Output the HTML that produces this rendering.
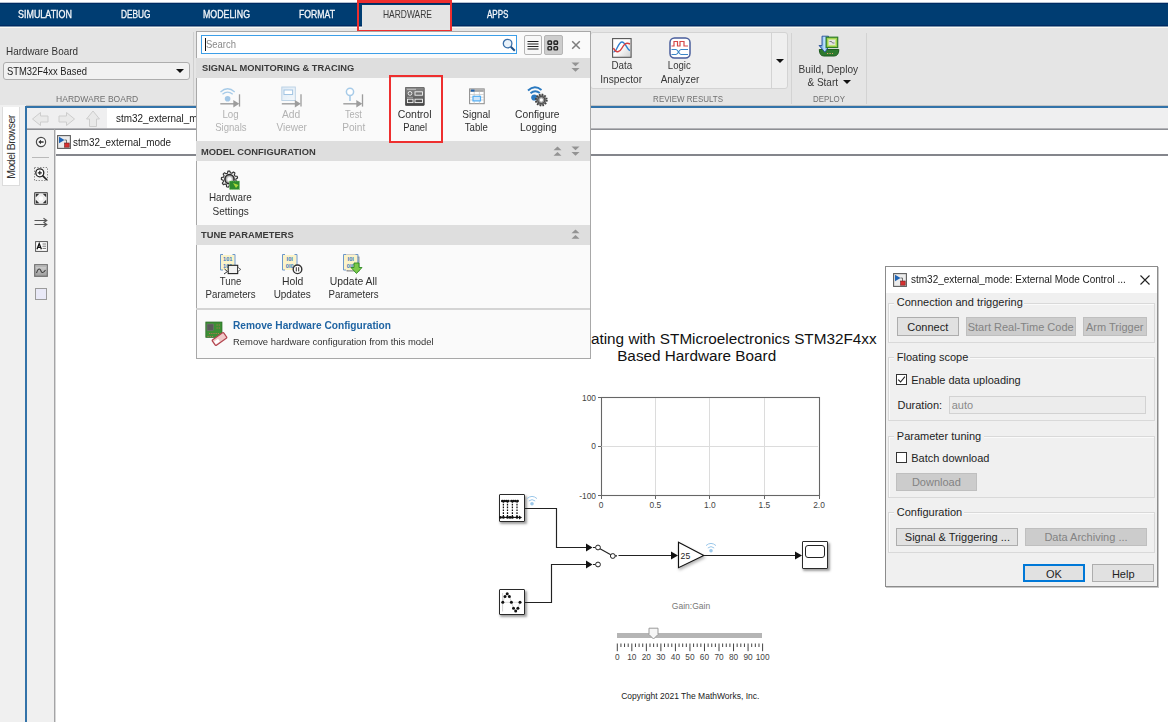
<!DOCTYPE html>
<html><head><meta charset="utf-8"><style>
html,body{margin:0;padding:0;width:1168px;height:722px;overflow:hidden;background:#fff;position:relative;font-family:"Liberation Sans",sans-serif}
</style></head><body>
<div style="position:absolute;left:0px;top:0px;width:1168px;height:3px;background:#fff"></div>
<div style="position:absolute;left:0px;top:3px;width:1168px;height:24px;background:#003d72"></div>
<div style="position:absolute;left:0px;top:2px;width:1168px;height:1px;background:#b3c2d2"></div>
<div style="position:absolute;left:0px;top:3px;width:1168px;height:1px;background:#002a62"></div>
<div style="position:absolute;left:0px;top:25px;width:1168px;height:1px;background:#002a62"></div>
<div style="position:absolute;left:0px;top:26px;width:1168px;height:1px;background:#7893ab"></div>
<div style="position:absolute;left:18px;top:9.57px;font:400 10.2px/1 'Liberation Sans',sans-serif;color:#f4f7fa;white-space:nowrap;-webkit-text-stroke:0.3px #f4f7fa"><span id="t1" style="display:inline-block;transform:scaleX(0.8778);transform-origin:0 0;">SIMULATION</span></div>
<div style="position:absolute;left:121px;top:9.57px;font:400 10.2px/1 'Liberation Sans',sans-serif;color:#f4f7fa;white-space:nowrap;-webkit-text-stroke:0.3px #f4f7fa"><span id="t2" style="display:inline-block;transform:scaleX(0.8141);transform-origin:0 0;">DEBUG</span></div>
<div style="position:absolute;left:202.5px;top:9.57px;font:400 10.2px/1 'Liberation Sans',sans-serif;color:#f4f7fa;white-space:nowrap;-webkit-text-stroke:0.3px #f4f7fa"><span id="t3" style="display:inline-block;transform:scaleX(0.8649);transform-origin:0 0;">MODELING</span></div>
<div style="position:absolute;left:298.5px;top:9.57px;font:400 10.2px/1 'Liberation Sans',sans-serif;color:#f4f7fa;white-space:nowrap;-webkit-text-stroke:0.3px #f4f7fa"><span id="t4" style="display:inline-block;transform:scaleX(0.8518);transform-origin:0 0;">FORMAT</span></div>
<div style="position:absolute;left:487px;top:9.57px;font:400 10.2px/1 'Liberation Sans',sans-serif;color:#f4f7fa;white-space:nowrap;-webkit-text-stroke:0.3px #f4f7fa"><span id="t5" style="display:inline-block;transform:scaleX(0.7908);transform-origin:0 0;">APPS</span></div>
<div style="position:absolute;left:362px;top:5px;width:88px;height:26px;background:#e4e4e4"></div>
<div style="position:absolute;left:382.5px;top:9.57px;font:400 10.2px/1 'Liberation Sans',sans-serif;color:#3a3a3a;white-space:nowrap;"><span id="t6" style="display:inline-block;transform:scaleX(0.8296);transform-origin:0 0;">HARDWARE</span></div>
<div style="position:absolute;left:0px;top:27px;width:1168px;height:78px;background:#e5e5e5"></div>
<div style="position:absolute;left:0px;top:27px;width:1168px;height:1px;background:#fbf8f4"></div>
<div style="position:absolute;left:362px;top:26px;width:88px;height:2px;background:#e4e4e4"></div>
<div style="position:absolute;left:357px;top:0px;width:95px;height:33px;border:2px solid #ee2f2f;border-top-width:3px;border-bottom-width:3px;box-sizing:border-box"></div>
<div style="position:absolute;left:6px;top:45.66px;font:400 10.8px/1 'Liberation Sans',sans-serif;color:#333;white-space:nowrap;"><span id="t7" style="display:inline-block;transform:scaleX(0.9157);transform-origin:0 0;">Hardware Board</span></div>
<div style="position:absolute;left:3px;top:62px;width:187px;height:18px;background:#f1f1f1;border:1px solid #adadad;border-radius:3px;box-sizing:border-box"></div>
<div style="position:absolute;left:7px;top:66.43px;font:400 10.6px/1 'Liberation Sans',sans-serif;color:#222;white-space:nowrap;"><span id="t8" style="display:inline-block;transform:scaleX(0.8880);transform-origin:0 0;">STM32F4xx Based</span></div>
<svg style="position:absolute;left:176px;top:69px;" width="8" height="4" viewBox="0 0 8 4"><path d="M0 0H8L4 4Z" fill="#111"/></svg>
<div style="position:absolute;left:-203.3px;width:600px;text-align:center;top:94.14px;font:400 9.4px/1 'Liberation Sans',sans-serif;color:#707070;white-space:nowrap;"><span id="t9" style="display:inline-block;transform:scaleX(0.9103);transform-origin:50% 0;">HARDWARE BOARD</span></div>
<div style="position:absolute;left:193px;top:32px;width:1px;height:72px;background:#cfcfcf"></div>
<div style="position:absolute;left:590px;top:32px;width:198px;height:57px;background:#efefef;border:1px solid #d3d3d3;border-radius:3px;box-sizing:border-box"></div>
<div style="position:absolute;left:771px;top:33px;width:1px;height:55px;background:#d3d3d3"></div>
<svg style="position:absolute;left:776px;top:59px;" width="8" height="4" viewBox="0 0 8 4"><path d="M0 0H8L4 4Z" fill="#111"/></svg>
<div style="position:absolute;left:321.6px;width:600px;text-align:center;top:61.28px;font:400 10.3px/1 'Liberation Sans',sans-serif;color:#383838;white-space:nowrap;"><span id="t10" style="display:inline-block;transform:scaleX(0.9510);transform-origin:50% 0;">Data</span></div>
<div style="position:absolute;left:321.5px;width:600px;text-align:center;top:75.08px;font:400 10.3px/1 'Liberation Sans',sans-serif;color:#383838;white-space:nowrap;"><span id="t11" style="display:inline-block;transform:scaleX(0.9868);transform-origin:50% 0;">Inspector</span></div>
<div style="position:absolute;left:379.5px;width:600px;text-align:center;top:61.28px;font:400 10.3px/1 'Liberation Sans',sans-serif;color:#383838;white-space:nowrap;"><span id="t12" style="display:inline-block;transform:scaleX(0.9340);transform-origin:50% 0;">Logic</span></div>
<div style="position:absolute;left:379.70000000000005px;width:600px;text-align:center;top:75.08px;font:400 10.3px/1 'Liberation Sans',sans-serif;color:#383838;white-space:nowrap;"><span id="t13" style="display:inline-block;transform:scaleX(0.9635);transform-origin:50% 0;">Analyzer</span></div>
<div style="position:absolute;left:387.6px;width:600px;text-align:center;top:94.14px;font:400 9.4px/1 'Liberation Sans',sans-serif;color:#707070;white-space:nowrap;"><span id="t14" style="display:inline-block;transform:scaleX(0.8510);transform-origin:50% 0;">REVIEW RESULTS</span></div>
<div style="position:absolute;left:791px;top:33px;width:1px;height:71px;background:#d3d3d3"></div>
<div style="position:absolute;left:528.2px;width:600px;text-align:center;top:64.78px;font:400 10.3px/1 'Liberation Sans',sans-serif;color:#383838;white-space:nowrap;"><span id="t15" style="display:inline-block;transform:scaleX(0.9823);transform-origin:50% 0;">Build, Deploy</span></div>
<div style="position:absolute;left:522.6px;width:600px;text-align:center;top:78.18px;font:400 10.3px/1 'Liberation Sans',sans-serif;color:#383838;white-space:nowrap;"><span id="t16" style="display:inline-block;transform:scaleX(0.9751);transform-origin:50% 0;">&amp; Start</span></div>
<svg style="position:absolute;left:843px;top:80px;" width="8" height="4" viewBox="0 0 8 4"><path d="M0 0H8L4 4Z" fill="#111"/></svg>
<div style="position:absolute;left:528.6px;width:600px;text-align:center;top:94.14px;font:400 9.4px/1 'Liberation Sans',sans-serif;color:#707070;white-space:nowrap;"><span id="t17" style="display:inline-block;transform:scaleX(0.8411);transform-origin:50% 0;">DEPLOY</span></div>
<div style="position:absolute;left:866px;top:33px;width:1px;height:71px;background:#d3d3d3"></div>
<div style="position:absolute;left:0px;top:105px;width:1168px;height:617px;background:#f0f0f0"></div>
<div style="position:absolute;left:26px;top:105px;width:1142px;height:1px;background:#c4c4c4"></div>
<div style="position:absolute;left:25px;top:106px;width:1143px;height:2px;background:#3373a9"></div>
<div style="position:absolute;left:25px;top:106px;width:2px;height:616px;background:#3373a9"></div>
<div style="position:absolute;left:2px;top:107px;width:18px;height:79px;background:#fff;border:1px solid #dcdcdc;border-top:none;box-sizing:border-box"></div>
<div style="position:absolute;left:-22px;top:141px;width:66px;height:12px;transform:rotate(-90deg);letter-spacing:-0.5px;font:400 10.5px/12px 'Liberation Sans',sans-serif;color:#333;text-align:center;white-space:nowrap">Model Browser</div>
<div style="position:absolute;left:27px;top:108px;width:1141px;height:20px;background:#efeff0"></div>
<div style="position:absolute;left:107px;top:108px;width:200px;height:21px;background:#fff"></div>
<div style="position:absolute;left:27px;top:128px;width:1141px;height:1px;background:#b4b4b8"></div>
<div style="position:absolute;left:27px;top:129px;width:1141px;height:1px;background:#8d8f94"></div>
<div style="position:absolute;left:116.2px;top:114.38px;font:400 10.3px/1 'Liberation Sans',sans-serif;color:#222;white-space:nowrap;"><span id="t18" style="display:inline-block;transform:scaleX(0.9618);transform-origin:0 0;">stm32_external_mode</span></div>
<div style="position:absolute;left:27px;top:130px;width:28px;height:592px;background:#f0f0f0"></div>
<div style="position:absolute;left:54px;top:129px;width:1px;height:593px;background:#a4a4a6"></div>
<div style="position:absolute;left:55px;top:130px;width:1px;height:592px;background:#d8d8d8"></div>
<div style="position:absolute;left:56px;top:130px;width:1112px;height:24px;background:#fff"></div>
<div style="position:absolute;left:56px;top:154px;width:1112px;height:2px;background:#84868c"></div>
<div style="position:absolute;left:72.7px;top:137.58px;font:400 10.3px/1 'Liberation Sans',sans-serif;color:#222;white-space:nowrap;"><span id="t19" style="display:inline-block;transform:scaleX(0.9618);transform-origin:0 0;">stm32_external_mode</span></div>
<div style="position:absolute;left:56px;top:156px;width:1112px;height:566px;background:#fff"></div>
<div style="position:absolute;left:276.6px;width:600px;text-align:right;top:331.45px;font:400 15.3px/1 'Liberation Sans',sans-serif;color:#111;white-space:nowrap;">Communicating with STMicroelectronics STM32F4xx</div>
<div style="position:absolute;left:396.70000000000005px;width:600px;text-align:center;top:348.25px;font:400 15.3px/1 'Liberation Sans',sans-serif;color:#111;white-space:nowrap;">Based Hardware Board</div>
<svg style="position:absolute;left:580px;top:385px;" width="250" height="130" viewBox="0 0 250 130"><rect x="21.5" y="12.5" width="218" height="98" fill="#fff" stroke="#666" stroke-width="1.1"/><line x1="75.5" y1="13" x2="75.5" y2="110" stroke="#dcdcdc" stroke-width="1"/><line x1="129.5" y1="13" x2="129.5" y2="110" stroke="#dcdcdc" stroke-width="1"/><line x1="184.5" y1="13" x2="184.5" y2="110" stroke="#dcdcdc" stroke-width="1"/><line x1="21" y1="61.5" x2="238" y2="61.5" stroke="#dcdcdc" stroke-width="1"/><line x1="18" y1="12.5" x2="21.5" y2="12.5" stroke="#666" stroke-width="1"/><line x1="18" y1="61.5" x2="21.5" y2="61.5" stroke="#666" stroke-width="1"/><line x1="18" y1="110.5" x2="21.5" y2="110.5" stroke="#666" stroke-width="1"/><line x1="21.5" y1="110.5" x2="21.5" y2="114" stroke="#666" stroke-width="1"/><line x1="75.5" y1="110.5" x2="75.5" y2="114" stroke="#666" stroke-width="1"/><line x1="129.5" y1="110.5" x2="129.5" y2="114" stroke="#666" stroke-width="1"/><line x1="184.5" y1="110.5" x2="184.5" y2="114" stroke="#666" stroke-width="1"/><line x1="239.5" y1="110.5" x2="239.5" y2="114" stroke="#666" stroke-width="1"/></svg>
<div style="position:absolute;left:-4px;width:600px;text-align:right;top:394.19px;font:400 8.4px/1 'Liberation Sans',sans-serif;color:#444;white-space:nowrap;">100</div>
<div style="position:absolute;left:-4px;width:600px;text-align:right;top:442.19px;font:400 8.4px/1 'Liberation Sans',sans-serif;color:#444;white-space:nowrap;">0</div>
<div style="position:absolute;left:-4px;width:600px;text-align:right;top:492.19px;font:400 8.4px/1 'Liberation Sans',sans-serif;color:#444;white-space:nowrap;">-100</div>
<div style="position:absolute;left:301px;width:600px;text-align:center;top:501.39px;font:400 8.4px/1 'Liberation Sans',sans-serif;color:#444;white-space:nowrap;">0</div>
<div style="position:absolute;left:355.29999999999995px;width:600px;text-align:center;top:501.39px;font:400 8.4px/1 'Liberation Sans',sans-serif;color:#444;white-space:nowrap;">0.5</div>
<div style="position:absolute;left:409.9px;width:600px;text-align:center;top:501.39px;font:400 8.4px/1 'Liberation Sans',sans-serif;color:#444;white-space:nowrap;">1.0</div>
<div style="position:absolute;left:464.4px;width:600px;text-align:center;top:501.39px;font:400 8.4px/1 'Liberation Sans',sans-serif;color:#444;white-space:nowrap;">1.5</div>
<div style="position:absolute;left:519px;width:600px;text-align:center;top:501.39px;font:400 8.4px/1 'Liberation Sans',sans-serif;color:#444;white-space:nowrap;">2.0</div>
<div style="position:absolute;left:391px;width:600px;text-align:center;top:602.10px;font:400 8.5px/1 'Liberation Sans',sans-serif;color:#777;white-space:nowrap;">Gain:Gain</div>
<div style="position:absolute;left:390.29999999999995px;width:600px;text-align:center;top:691.80px;font:400 8.5px/1 'Liberation Sans',sans-serif;color:#222;white-space:nowrap;">Copyright 2021 The MathWorks, Inc.</div>
<div style="position:absolute;left:196px;top:31px;width:395px;height:328px;background:#fafafa;border:1px solid #a8a8a8;box-sizing:border-box"></div>
<div style="position:absolute;left:200.5px;top:35px;width:316.5px;height:19px;background:#fff;border:1.5px solid #3d9fe8;box-sizing:border-box"></div>
<div style="position:absolute;left:205px;top:38px;width:1px;height:13px;background:#111"></div>
<div style="position:absolute;left:205.5px;top:40.08px;font:400 10.3px/1 'Liberation Sans',sans-serif;color:#8a8a8a;white-space:nowrap;"><span id="t20" style="display:inline-block;transform:scaleX(0.9191);transform-origin:0 0;">Search</span></div>
<div style="position:absolute;left:523.5px;top:34.5px;width:18.5px;height:20px;background:#f7f7f7;border:1px solid #b6b6b6;border-radius:2px;box-sizing:border-box"></div>
<div style="position:absolute;left:544px;top:34.5px;width:18.5px;height:20px;background:#cdcdcd;border:1px solid #b6b6b6;border-radius:2px;box-sizing:border-box"></div>
<div style="position:absolute;left:196px;top:57.5px;width:394px;height:20px;background:#dedede"></div>
<div style="position:absolute;left:196px;top:141px;width:394px;height:20px;background:#dedede"></div>
<div style="position:absolute;left:196px;top:224.5px;width:394px;height:20.5px;background:#dedede"></div>
<div style="position:absolute;left:201.6px;top:62.90px;font:700 9.8px/1 'Liberation Sans',sans-serif;color:#3a3a3a;white-space:nowrap;"><span id="t21" style="display:inline-block;transform:scaleX(0.9507);transform-origin:0 0;">SIGNAL MONITORING &amp; TRACING</span></div>
<div style="position:absolute;left:200.6px;top:146.80px;font:700 9.8px/1 'Liberation Sans',sans-serif;color:#3a3a3a;white-space:nowrap;"><span id="t22" style="display:inline-block;transform:scaleX(0.9565);transform-origin:0 0;">MODEL CONFIGURATION</span></div>
<div style="position:absolute;left:201px;top:230.40px;font:700 9.8px/1 'Liberation Sans',sans-serif;color:#3a3a3a;white-space:nowrap;"><span id="t23" style="display:inline-block;transform:scaleX(0.9522);transform-origin:0 0;">TUNE PARAMETERS</span></div>
<div style="position:absolute;left:-69.35px;width:600px;text-align:center;top:109.78px;font:400 10.3px/1 'Liberation Sans',sans-serif;color:#b2b2b2;white-space:nowrap;"><span id="t24" style="display:inline-block;transform:scaleX(0.9484);transform-origin:50% 0;">Log</span></div>
<div style="position:absolute;left:-69.5px;width:600px;text-align:center;top:123.08px;font:400 10.3px/1 'Liberation Sans',sans-serif;color:#b2b2b2;white-space:nowrap;"><span id="t25" style="display:inline-block;transform:scaleX(0.9295);transform-origin:50% 0;">Signals</span></div>
<div style="position:absolute;left:-8.350000000000023px;width:600px;text-align:center;top:109.78px;font:400 10.3px/1 'Liberation Sans',sans-serif;color:#b2b2b2;white-space:nowrap;"><span id="t26" style="display:inline-block;transform:scaleX(0.9985);transform-origin:50% 0;">Add</span></div>
<div style="position:absolute;left:-7.949999999999989px;width:600px;text-align:center;top:123.08px;font:400 10.3px/1 'Liberation Sans',sans-serif;color:#b2b2b2;white-space:nowrap;"><span id="t27" style="display:inline-block;transform:scaleX(0.9745);transform-origin:50% 0;">Viewer</span></div>
<div style="position:absolute;left:53.5px;width:600px;text-align:center;top:109.78px;font:400 10.3px/1 'Liberation Sans',sans-serif;color:#b2b2b2;white-space:nowrap;"><span id="t28" style="display:inline-block;transform:scaleX(0.8999);transform-origin:50% 0;">Test</span></div>
<div style="position:absolute;left:53.94999999999999px;width:600px;text-align:center;top:123.08px;font:400 10.3px/1 'Liberation Sans',sans-serif;color:#b2b2b2;white-space:nowrap;"><span id="t29" style="display:inline-block;transform:scaleX(0.9836);transform-origin:50% 0;">Point</span></div>
<div style="position:absolute;left:114.94999999999999px;width:600px;text-align:center;top:109.78px;font:400 10.3px/1 'Liberation Sans',sans-serif;color:#303030;white-space:nowrap;"><span id="t30" style="display:inline-block;transform:scaleX(1.0210);transform-origin:50% 0;">Control</span></div>
<div style="position:absolute;left:115.0px;width:600px;text-align:center;top:123.08px;font:400 10.3px/1 'Liberation Sans',sans-serif;color:#303030;white-space:nowrap;"><span id="t31" style="display:inline-block;transform:scaleX(0.9110);transform-origin:50% 0;">Panel</span></div>
<div style="position:absolute;left:176.5px;width:600px;text-align:center;top:109.78px;font:400 10.3px/1 'Liberation Sans',sans-serif;color:#303030;white-space:nowrap;"><span id="t32" style="display:inline-block;transform:scaleX(0.9782);transform-origin:50% 0;">Signal</span></div>
<div style="position:absolute;left:176.5px;width:600px;text-align:center;top:123.08px;font:400 10.3px/1 'Liberation Sans',sans-serif;color:#303030;white-space:nowrap;"><span id="t33" style="display:inline-block;transform:scaleX(0.9340);transform-origin:50% 0;">Table</span></div>
<div style="position:absolute;left:237.54999999999995px;width:600px;text-align:center;top:109.78px;font:400 10.3px/1 'Liberation Sans',sans-serif;color:#303030;white-space:nowrap;"><span id="t34" style="display:inline-block;transform:scaleX(0.9965);transform-origin:50% 0;">Configure</span></div>
<div style="position:absolute;left:238.0px;width:600px;text-align:center;top:123.08px;font:400 10.3px/1 'Liberation Sans',sans-serif;color:#303030;white-space:nowrap;"><span id="t35" style="display:inline-block;transform:scaleX(1.0039);transform-origin:50% 0;">Logging</span></div>
<div style="position:absolute;left:-69.4px;width:600px;text-align:center;top:193.48px;font:400 10.3px/1 'Liberation Sans',sans-serif;color:#303030;white-space:nowrap;"><span id="t36" style="display:inline-block;transform:scaleX(0.9588);transform-origin:50% 0;">Hardware</span></div>
<div style="position:absolute;left:-69.55000000000001px;width:600px;text-align:center;top:207.28px;font:400 10.3px/1 'Liberation Sans',sans-serif;color:#303030;white-space:nowrap;"><span id="t37" style="display:inline-block;transform:scaleX(0.9753);transform-origin:50% 0;">Settings</span></div>
<div style="position:absolute;left:-69.30000000000001px;width:600px;text-align:center;top:276.88px;font:400 10.3px/1 'Liberation Sans',sans-serif;color:#303030;white-space:nowrap;"><span id="t38" style="display:inline-block;transform:scaleX(0.9267);transform-origin:50% 0;">Tune</span></div>
<div style="position:absolute;left:-69.6px;width:600px;text-align:center;top:290.38px;font:400 10.3px/1 'Liberation Sans',sans-serif;color:#303030;white-space:nowrap;"><span id="t39" style="display:inline-block;transform:scaleX(0.9392);transform-origin:50% 0;">Parameters</span></div>
<div style="position:absolute;left:-7.699999999999989px;width:600px;text-align:center;top:276.88px;font:400 10.3px/1 'Liberation Sans',sans-serif;color:#303030;white-space:nowrap;"><span id="t40" style="display:inline-block;transform:scaleX(1.0100);transform-origin:50% 0;">Hold</span></div>
<div style="position:absolute;left:-7.850000000000023px;width:600px;text-align:center;top:290.38px;font:400 10.3px/1 'Liberation Sans',sans-serif;color:#303030;white-space:nowrap;"><span id="t41" style="display:inline-block;transform:scaleX(0.9672);transform-origin:50% 0;">Updates</span></div>
<div style="position:absolute;left:53.30000000000001px;width:600px;text-align:center;top:276.88px;font:400 10.3px/1 'Liberation Sans',sans-serif;color:#303030;white-space:nowrap;"><span id="t42" style="display:inline-block;transform:scaleX(1.0095);transform-origin:50% 0;">Update All</span></div>
<div style="position:absolute;left:53.39999999999998px;width:600px;text-align:center;top:290.38px;font:400 10.3px/1 'Liberation Sans',sans-serif;color:#303030;white-space:nowrap;"><span id="t43" style="display:inline-block;transform:scaleX(0.9392);transform-origin:50% 0;">Parameters</span></div>
<div style="position:absolute;left:196px;top:307.5px;width:394px;height:2px;background:#d4d4d4"></div>
<div style="position:absolute;left:232.5px;top:321.40px;font:700 10.4px/1 'Liberation Sans',sans-serif;color:#1f64a3;white-space:nowrap;"><span id="t44" style="display:inline-block;transform:scaleX(0.9773);transform-origin:0 0;">Remove Hardware Configuration</span></div>
<div style="position:absolute;left:232.5px;top:336.50px;font:400 9.8px/1 'Liberation Sans',sans-serif;color:#333;white-space:nowrap;"><span id="t45" style="display:inline-block;transform:scaleX(0.9618);transform-origin:0 0;">Remove hardware configuration from this model</span></div>
<div style="position:absolute;left:389px;top:75px;width:54px;height:68px;border:2px solid #ee2f2f;box-sizing:border-box"></div>
<div style="position:absolute;left:885px;top:266px;width:273px;height:321px;background:#f0f0f0;border:1px solid #8c8c8c;box-sizing:border-box;box-shadow:1px 1px 0 #c8c8c8"></div>
<div style="position:absolute;left:886px;top:267px;width:271px;height:26px;background:#fff"></div>
<div style="position:absolute;left:911px;top:274.88px;font:400 10.3px/1 'Liberation Sans',sans-serif;color:#1a1a1a;white-space:nowrap;"><span id="t46" style="display:inline-block;transform:scaleX(0.9698);transform-origin:0 0;">stm32_external_mode: External Mode Control ...</span></div>
<svg style="position:absolute;left:1140px;top:275px;" width="10" height="10" viewBox="0 0 10 10"><path d="M0.5 0.5L9.5 9.5M9.5 0.5L0.5 9.5" stroke="#222" stroke-width="1.1"/></svg>
<div style="position:absolute;left:888px;top:302.5px;width:267px;height:40.5px;border:1px solid #d9d9d9;box-shadow:inset 1px 1px 0 #fafafa;box-sizing:border-box"></div>
<div style="position:absolute;left:888px;top:356.7px;width:267px;height:64.30000000000001px;border:1px solid #d9d9d9;box-shadow:inset 1px 1px 0 #fafafa;box-sizing:border-box"></div>
<div style="position:absolute;left:888px;top:435.6px;width:267px;height:62.69999999999999px;border:1px solid #d9d9d9;box-shadow:inset 1px 1px 0 #fafafa;box-sizing:border-box"></div>
<div style="position:absolute;left:888px;top:512.3px;width:267px;height:40.90000000000009px;border:1px solid #d9d9d9;box-shadow:inset 1px 1px 0 #fafafa;box-sizing:border-box"></div>
<div style="position:absolute;left:894px;top:295.4px;width:130px;height:12px;background:#f0f0f0"></div>
<div style="position:absolute;left:896.8px;top:296.79px;font:400 11px/1 'Liberation Sans',sans-serif;color:#1e1e1e;white-space:nowrap;">Connection and triggering</div>
<div style="position:absolute;left:894px;top:351px;width:76px;height:12px;background:#f0f0f0"></div>
<div style="position:absolute;left:896.8px;top:352.39px;font:400 11px/1 'Liberation Sans',sans-serif;color:#1e1e1e;white-space:nowrap;">Floating scope</div>
<div style="position:absolute;left:894px;top:429.3px;width:90px;height:12px;background:#f0f0f0"></div>
<div style="position:absolute;left:896.8px;top:430.69px;font:400 11px/1 'Liberation Sans',sans-serif;color:#1e1e1e;white-space:nowrap;">Parameter tuning</div>
<div style="position:absolute;left:894px;top:506px;width:70px;height:12px;background:#f0f0f0"></div>
<div style="position:absolute;left:896.8px;top:507.39px;font:400 11px/1 'Liberation Sans',sans-serif;color:#1e1e1e;white-space:nowrap;">Configuration</div>
<div style="position:absolute;left:896.5px;top:317px;width:62.5px;height:18.5px;background:#e1e1e1;border:1px solid #adadad;box-sizing:border-box"></div>
<div style="position:absolute;left:627.75px;width:600px;text-align:center;top:321.84px;font:400 11px/1 'Liberation Sans',sans-serif;color:#1e1e1e;white-space:nowrap;">Connect</div>
<div style="position:absolute;left:965.7px;top:317px;width:110px;height:18.5px;background:#cccccc;border:1px solid #bfbfbf;box-sizing:border-box"></div>
<div style="position:absolute;left:720.7px;width:600px;text-align:center;top:321.84px;font:400 11px/1 'Liberation Sans',sans-serif;color:#838383;white-space:nowrap;">Start Real-Time Code</div>
<div style="position:absolute;left:1082.7px;top:317px;width:64px;height:18.5px;background:#cccccc;border:1px solid #bfbfbf;box-sizing:border-box"></div>
<div style="position:absolute;left:814.7px;width:600px;text-align:center;top:321.84px;font:400 11px/1 'Liberation Sans',sans-serif;color:#838383;white-space:nowrap;">Arm Trigger</div>
<div style="position:absolute;left:895.5px;top:373.5px;width:11px;height:11px;background:#fff;border:1px solid #333;box-sizing:border-box"></div>
<svg style="position:absolute;left:897px;top:375px;" width="9" height="9" viewBox="0 0 9 9"><path d="M1.2 4.6L3.6 7L7.9 1.6" fill="none" stroke="#222" stroke-width="1.1"/></svg>
<div style="position:absolute;left:911.2px;top:374.79px;font:400 11px/1 'Liberation Sans',sans-serif;color:#1e1e1e;white-space:nowrap;">Enable data uploading</div>
<div style="position:absolute;left:897.5px;top:399.69px;font:400 11px/1 'Liberation Sans',sans-serif;color:#1e1e1e;white-space:nowrap;">Duration:</div>
<div style="position:absolute;left:948.5px;top:395.5px;width:197px;height:18px;background:#ececec;border:1px solid #d2d2d2;box-sizing:border-box"></div>
<div style="position:absolute;left:951.7px;top:399.69px;font:400 11px/1 'Liberation Sans',sans-serif;color:#8a8a8a;white-space:nowrap;">auto</div>
<div style="position:absolute;left:895.5px;top:452.3px;width:11px;height:11px;background:#fff;border:1px solid #333;box-sizing:border-box"></div>
<div style="position:absolute;left:911.2px;top:453.19px;font:400 11px/1 'Liberation Sans',sans-serif;color:#1e1e1e;white-space:nowrap;">Batch download</div>
<div style="position:absolute;left:896.2px;top:472.6px;width:80.4px;height:18.4px;background:#cccccc;border:1px solid #bfbfbf;box-sizing:border-box"></div>
<div style="position:absolute;left:636.4000000000001px;width:600px;text-align:center;top:477.39px;font:400 11px/1 'Liberation Sans',sans-serif;color:#838383;white-space:nowrap;">Download</div>
<div style="position:absolute;left:896.3px;top:527.5px;width:122.2px;height:18.1px;background:#e1e1e1;border:1px solid #adadad;box-sizing:border-box"></div>
<div style="position:absolute;left:657.4px;width:600px;text-align:center;top:532.14px;font:400 11px/1 'Liberation Sans',sans-serif;color:#1e1e1e;white-space:nowrap;">Signal &amp; Triggering ...</div>
<div style="position:absolute;left:1025.2px;top:527.5px;width:121.6px;height:18.1px;background:#cccccc;border:1px solid #bfbfbf;box-sizing:border-box"></div>
<div style="position:absolute;left:786.0px;width:600px;text-align:center;top:532.14px;font:400 11px/1 'Liberation Sans',sans-serif;color:#838383;white-space:nowrap;">Data Archiving ...</div>
<div style="position:absolute;left:1023.2px;top:564.3px;width:61.6px;height:18.2px;background:#e1e1e1;border:2px solid #0078d7;box-sizing:border-box"></div>
<div style="position:absolute;left:754.0px;width:600px;text-align:center;top:568.99px;font:400 11px/1 'Liberation Sans',sans-serif;color:#1e1e1e;white-space:nowrap;">OK</div>
<div style="position:absolute;left:1092.4px;top:564.3px;width:61.6px;height:18.2px;background:#e1e1e1;border:1px solid #adadad;box-sizing:border-box"></div>
<div style="position:absolute;left:823.2px;width:600px;text-align:center;top:568.99px;font:400 11px/1 'Liberation Sans',sans-serif;color:#1e1e1e;white-space:nowrap;">Help</div>
<svg style="position:absolute;left:611px;top:37px;" width="22" height="22" viewBox="0 0 22 22">
<defs><linearGradient id="di" x1="0" y1="0" x2="1" y2="1"><stop offset="0.45" stop-color="#fff"/><stop offset="1" stop-color="#cfcfcf"/></linearGradient></defs>
<rect x="1.6" y="1.6" width="18.5" height="18.7" fill="url(#di)" stroke="#555" stroke-width="1.1"/>
<path d="M2.5 15 C6 15 7 5 11 5 C14.5 5 16 13 19 13.5" fill="none" stroke="#2f7fd0" stroke-width="1.4"/>
<path d="M2.5 11 C5 17 9 15 11 11 C13 7 15 5 19 7" fill="none" stroke="#d64040" stroke-width="1.4"/>
</svg>
<svg style="position:absolute;left:668px;top:36px;" width="24" height="24" viewBox="0 0 24 24">
<rect x="2" y="2" width="20" height="20" rx="4.5" fill="#fff" stroke="#4a5e9c" stroke-width="1.5"/>
<path d="M3.5 10 H6 V5.5 H9.5 V10 H12 V5.5 H16 V10 H20" fill="none" stroke="#d54848" stroke-width="1.2"/>
<path d="M3.5 13.5 H8 C10 13.5 11 18.5 13 18.5 H20 M3.5 18.5 H8 C10 18.5 11 13.5 13 13.5 H20" fill="none" stroke="#3c86c8" stroke-width="1.2"/>
</svg>
<svg style="position:absolute;left:817px;top:35px;" width="24" height="23" viewBox="0 0 24 23">
<defs><linearGradient id="bd" x1="0" y1="0" x2="1" y2="0"><stop offset="0" stop-color="#2b6cc0"/><stop offset="0.5" stop-color="#bfe3ff"/><stop offset="1" stop-color="#3a88d8"/></linearGradient></defs>
<path d="M2.3 14.5 Q2.3 21 7 21 H17 Q21.8 21 21.8 14.5 Z" fill="#2d7a2e" stroke="#1d5a1e" stroke-width="1"/>
<path d="M5 1.2 H11.5 V10.5 H12.5 L8 17.2 L2 10.5 H5 Z" fill="url(#bd)" stroke="#27509a" stroke-width="0.9"/>
<rect x="9.2" y="2.2" width="11.5" height="10.3" fill="#9fd14a" stroke="#2f7d2a" stroke-width="1.2"/>
<rect x="11.3" y="4.3" width="7.3" height="6" fill="#e4e4e4" stroke="#c5ea7c" stroke-width="0.8"/>
<path d="M12.5 6.5 L14.5 6.5 L15.5 8 L17.5 8" fill="none" stroke="#666" stroke-width="0.8"/>
<path d="M10 18.5 H16" stroke="#e8a070" stroke-width="1.2" stroke-dasharray="1.2 1.3"/>
</svg>
<svg style="position:absolute;left:31px;top:111px;" width="18" height="16" viewBox="0 0 18 16"><path d="M1.5 8 L9.5 1.5 V5 H17 V11 H9.5 V14.5 Z" fill="#e9e9e9" stroke="#cdcdcd" stroke-width="1"/></svg>
<svg style="position:absolute;left:58px;top:111px;" width="18" height="16" viewBox="0 0 18 16"><path d="M16.5 8 L8.5 1.5 V5 H1 V11 H8.5 V14.5 Z" fill="#e9e9e9" stroke="#cdcdcd" stroke-width="1"/></svg>
<svg style="position:absolute;left:85px;top:110px;" width="16" height="18" viewBox="0 0 16 18"><path d="M8 1 L14.5 9 H11.5 V16.5 H4.5 V9 H1.5 Z" fill="#e9e9e9" stroke="#cdcdcd" stroke-width="1"/></svg>
<svg style="position:absolute;left:35px;top:136px;" width="12" height="12" viewBox="0 0 12 12"><circle cx="6" cy="6" r="4.6" fill="#fafafa" stroke="#4a4a4a" stroke-width="1.2"/><path d="M3.3 6 L6 3.8 V5.2 H8.6 V6.8 H6 V8.2 Z" fill="#333"/></svg>
<div style="position:absolute;left:32px;top:157px;width:17px;height:1px;background:#b9b9b9"></div>
<svg style="position:absolute;left:33px;top:166px;" width="16" height="16" viewBox="0 0 16 16"><rect x="1.5" y="1.5" width="13" height="13" fill="none" stroke="#777" stroke-width="0.9" stroke-dasharray="1.3 1.5"/>
<circle cx="6.8" cy="6.8" r="4" fill="#fff" stroke="#222" stroke-width="1.3"/><path d="M4.8 6.8H8.8M6.8 4.8V8.8" stroke="#222" stroke-width="1.2"/>
<path d="M9.6 9.6 L14 14" stroke="#222" stroke-width="1.7"/></svg>
<svg style="position:absolute;left:34px;top:192px;" width="14" height="13" viewBox="0 0 14 13"><rect x="0.6" y="0.6" width="12.8" height="11.8" rx="0.8" fill="#eee" stroke="#5a5a5a" stroke-width="1.2"/>
<path d="M1.8 1.8H5.3L1.8 5.3ZM12.2 1.8H8.7L12.2 5.3ZM1.8 11.2H5.3L1.8 7.7ZM12.2 11.2H8.7L12.2 7.7Z" fill="#333"/>
<circle cx="7" cy="6.5" r="2.2" fill="#fff"/></svg>
<svg style="position:absolute;left:34px;top:217px;" width="15" height="11" viewBox="0 0 15 11"><path d="M0.5 3.5H12M0.5 7.5H12M9.5 1.3L12.8 3.5L9.5 5.7M9.5 5.3L12.8 7.5L9.5 9.7" fill="none" stroke="#555" stroke-width="1.1"/></svg>
<svg style="position:absolute;left:34.5px;top:240.5px;" width="13" height="11" viewBox="0 0 13 11"><rect x="0.6" y="0.6" width="11.8" height="9.8" fill="#fff" stroke="#555" stroke-width="1"/>
<path d="M2 8.3 L4.2 2.5 L6.4 8.3 M2.9 6.4 H5.5" fill="none" stroke="#111" stroke-width="1.3"/><path d="M7.5 3H11M7.5 5.2H11M7.5 7.4H11" stroke="#666" stroke-width="0.9"/></svg>
<svg style="position:absolute;left:34px;top:264px;" width="14" height="13" viewBox="0 0 14 13"><defs><linearGradient id="imi" x1="0" y1="0" x2="0" y2="1"><stop offset="0" stop-color="#d6d6d6"/><stop offset="1" stop-color="#9c9c9c"/></linearGradient></defs><rect x="0.7" y="0.7" width="12.6" height="11.6" fill="url(#imi)" stroke="#707070" stroke-width="1.2"/><path d="M1.5 2.2H12.5" stroke="#aaa" stroke-width="1"/>
<path d="M2.5 9 C4 4 6 4 7 7 C8 10 10 8 11.5 6" fill="none" stroke="#444" stroke-width="1.1"/></svg>
<div style="position:absolute;left:35px;top:288px;width:12px;height:12px;background:#e9e9f7;border:1px solid #9b9b9b;box-sizing:border-box"></div>
<svg style="position:absolute;left:57px;top:135px;" width="14" height="14" viewBox="0 0 14 14"><rect x="0.6" y="0.6" width="12.8" height="12.8" fill="#ececec" stroke="#5e5e5e" stroke-width="1.1"/>
<path d="M2 1.8 L7.5 5 L2 8.2 Z" fill="#1f64b6"/><path d="M7.5 5 H9.5 V8" stroke="#555" stroke-width="0.8" fill="none"/>
<rect x="7.6" y="8" width="4.6" height="4.2" fill="#d83030" stroke="#6a1d1d" stroke-width="0.6"/></svg>
<svg style="position:absolute;left:893px;top:272.5px;" width="14" height="14" viewBox="0 0 14 14"><rect x="0.6" y="0.6" width="12.8" height="12.8" fill="#ececec" stroke="#5e5e5e" stroke-width="1.1"/>
<path d="M2 1.8 L7.5 5 L2 8.2 Z" fill="#1f64b6"/><path d="M7.5 5 H9.5 V8" stroke="#555" stroke-width="0.8" fill="none"/>
<rect x="7.6" y="8" width="4.6" height="4.2" fill="#d83030" stroke="#6a1d1d" stroke-width="0.6"/></svg>
<div style="position:absolute;left:498.6px;top:494px;width:26.3px;height:27.8px;background:#fff;border:1.4px solid #2a2a2a;box-sizing:border-box;box-shadow:1.5px 2px 2.5px rgba(0,0,0,0.38);border-radius:1px"></div>
<svg style="position:absolute;left:498px;top:494px;" width="28" height="28" viewBox="0 0 28 28"><path d="M5.4 7.0 V23.4" stroke="#111" stroke-width="1.25" stroke-dasharray="1.7 1.1"/><path d="M9.5 7.0 V23.4" stroke="#111" stroke-width="1.25" stroke-dasharray="1.7 1.1"/><path d="M14.4 7.0 V23.4" stroke="#111" stroke-width="1.25" stroke-dasharray="1.7 1.1"/><path d="M19.0 7.0 V23.4" stroke="#111" stroke-width="1.25" stroke-dasharray="1.7 1.1"/><path d="M3.8 7.0 H11.0 M12.8 7.0 H20.5" stroke="#111" stroke-width="1.1" stroke-dasharray="1.2 0.8"/><path d="M1.5 23.4 H21.5" stroke="#111" stroke-width="1.1"/><g fill="#111"><circle cx="4.3" cy="7.0" r="1.35"/><circle cx="6.3" cy="7.0" r="1.35"/><circle cx="8.3" cy="7.0" r="1.35"/><circle cx="10.3" cy="7.0" r="1.35"/><circle cx="13.5" cy="7.0" r="1.35"/><circle cx="15.4" cy="7.0" r="1.35"/><circle cx="17.4" cy="7.0" r="1.35"/><circle cx="19.6" cy="7.0" r="1.35"/><circle cx="2.5" cy="23.4" r="1.35"/><circle cx="5.4" cy="23.4" r="1.35"/><circle cx="9.5" cy="23.4" r="1.35"/><circle cx="12.0" cy="23.4" r="1.35"/><circle cx="14.4" cy="23.4" r="1.35"/><circle cx="19.0" cy="23.4" r="1.35"/><path d="M21.0 21.4 L24.0 23.4 L21.0 25.4 Z"/></g></svg>
<svg style="position:absolute;left:526px;top:494.5px;" width="12" height="11" viewBox="0 0 12 11"><path d="M1 3.6 Q6 -0.8 11 3.6" fill="none" stroke="#9cc8ea" stroke-width="1"/>
<path d="M2.8 6 Q6 3.2 9.2 6" fill="none" stroke="#9cc8ea" stroke-width="1"/><circle cx="6" cy="8.8" r="1.8" fill="#9cc8ea"/></svg>
<div style="position:absolute;left:498.6px;top:588.7px;width:26.3px;height:26px;background:#fff;border:1.4px solid #2a2a2a;box-sizing:border-box;box-shadow:1.5px 2px 2.5px rgba(0,0,0,0.38);border-radius:1px"></div>
<svg style="position:absolute;left:498px;top:588px;" width="28" height="28" viewBox="0 0 28 28"><path d="M4.6 5 V23.5" stroke="#d0d0d0" stroke-width="1"/><path d="M4.8 14.3 H22" stroke="#d8d8d8" stroke-width="0.9"/>
<path d="M4.8 14.3 L7 8.4 L9.2 5.7 L11.4 8.4 L13.4 14.3 L15.5 20.3 L17.7 23 L19.9 20.3 L22 14.3" fill="none" stroke="#cfcfcf" stroke-width="0.9"/>
<g fill="#111"><circle cx="4.8" cy="14.3" r="1.5"/><circle cx="7" cy="8.4" r="1.5"/><circle cx="9.2" cy="5.7" r="1.5"/><circle cx="11.4" cy="8.4" r="1.5"/><circle cx="13.4" cy="14.3" r="1.5"/><circle cx="15.5" cy="20.3" r="1.5"/><circle cx="17.7" cy="23" r="1.5"/><circle cx="19.9" cy="20.3" r="1.5"/><circle cx="22" cy="14.3" r="1.5"/></g></svg>
<svg style="position:absolute;left:0px;top:0px;" width="1168" height="722" viewBox="0 0 1168 722">
<path d="M525 508.5 H556.5 V547.5 H586" fill="none" stroke="#222" stroke-width="1.15"/>
<path d="M525 602.5 H551.5 V564.5 H586" fill="none" stroke="#222" stroke-width="1.15"/>
<path d="M586 543.5 L592.5 547.5 L586 551.5 Z M586 560.5 L592.5 564.5 L586 568.5 Z" fill="#111"/>
<path d="M593 547.5 H595.6 M593 564.5 H595.6" stroke="#222" stroke-width="1"/>
<circle cx="598" cy="547.5" r="2.4" fill="#fff" stroke="#222" stroke-width="1"/>
<circle cx="598" cy="564.5" r="2.4" fill="#fff" stroke="#222" stroke-width="1"/>
<path d="M600 548.8 L610.8 554.8" stroke="#222" stroke-width="1.1"/>
<circle cx="612.8" cy="556" r="2.4" fill="#fff" stroke="#222" stroke-width="1"/>
<path d="M615.2 555.8 H617 M618.5 555.5 H671" stroke="#222" stroke-width="1.15"/>
<path d="M671 551.5 L678 555.5 L671 559.5 Z" fill="#111"/>
<path d="M678.5 542.2 L703.8 555.5 L678.5 567.7 Z" fill="#fff" stroke="#111" stroke-width="1.15" style="filter:drop-shadow(1.5px 2px 1.5px rgba(0,0,0,0.3))"/>
<path d="M704 555.5 H795" stroke="#222" stroke-width="1.15"/>
<path d="M795 551.5 L802 555.5 L795 559.5 Z" fill="#111"/>
</svg>
<div style="position:absolute;left:385.4px;width:600px;text-align:center;top:551.62px;font:400 8.6px/1 'Liberation Sans',sans-serif;color:#222;white-space:nowrap;">25</div>
<svg style="position:absolute;left:705px;top:542px;" width="12" height="11" viewBox="0 0 12 11"><path d="M1 3.6 Q6 -0.8 11 3.6" fill="none" stroke="#9cc8ea" stroke-width="1"/>
<path d="M2.8 6 Q6 3.2 9.2 6" fill="none" stroke="#9cc8ea" stroke-width="1"/><circle cx="6" cy="8.8" r="1.8" fill="#9cc8ea"/></svg>
<div style="position:absolute;left:801.8px;top:541px;width:26.2px;height:28px;background:#fff;border:1.4px solid #2a2a2a;box-sizing:border-box;box-shadow:1.5px 2px 2.5px rgba(0,0,0,0.38);border-radius:1px"></div>
<div style="position:absolute;left:805.3px;top:545.3px;width:19.4px;height:12.3px;border:1.3px solid #222;border-radius:3px;box-sizing:border-box"></div>
<div style="position:absolute;left:617px;top:633px;width:145.4px;height:5px;background:#b5b5b5"></div>
<svg style="position:absolute;left:648px;top:627px;" width="12" height="14" viewBox="0 0 12 14"><path d="M1 1.2 H10 V7.5 L5.5 12 L1 7.5 Z" fill="#f6f6f6" stroke="#9a9a9a" stroke-width="1"/></svg>
<svg style="position:absolute;left:0px;top:0px;" width="1168" height="722" viewBox="0 0 1168 722"><path d="M617.30 643.5 V651.2" stroke="#444" stroke-width="1"/><path d="M620.93 643.5 V647" stroke="#444" stroke-width="1"/><path d="M624.56 643.5 V647" stroke="#444" stroke-width="1"/><path d="M628.20 643.5 V647" stroke="#444" stroke-width="1"/><path d="M631.83 643.5 V651.2" stroke="#444" stroke-width="1"/><path d="M635.46 643.5 V647" stroke="#444" stroke-width="1"/><path d="M639.09 643.5 V647" stroke="#444" stroke-width="1"/><path d="M642.73 643.5 V647" stroke="#444" stroke-width="1"/><path d="M646.36 643.5 V651.2" stroke="#444" stroke-width="1"/><path d="M649.99 643.5 V647" stroke="#444" stroke-width="1"/><path d="M653.62 643.5 V647" stroke="#444" stroke-width="1"/><path d="M657.26 643.5 V647" stroke="#444" stroke-width="1"/><path d="M660.89 643.5 V651.2" stroke="#444" stroke-width="1"/><path d="M664.52 643.5 V647" stroke="#444" stroke-width="1"/><path d="M668.15 643.5 V647" stroke="#444" stroke-width="1"/><path d="M671.79 643.5 V647" stroke="#444" stroke-width="1"/><path d="M675.42 643.5 V651.2" stroke="#444" stroke-width="1"/><path d="M679.05 643.5 V647" stroke="#444" stroke-width="1"/><path d="M682.68 643.5 V647" stroke="#444" stroke-width="1"/><path d="M686.32 643.5 V647" stroke="#444" stroke-width="1"/><path d="M689.95 643.5 V651.2" stroke="#444" stroke-width="1"/><path d="M693.58 643.5 V647" stroke="#444" stroke-width="1"/><path d="M697.21 643.5 V647" stroke="#444" stroke-width="1"/><path d="M700.85 643.5 V647" stroke="#444" stroke-width="1"/><path d="M704.48 643.5 V651.2" stroke="#444" stroke-width="1"/><path d="M708.11 643.5 V647" stroke="#444" stroke-width="1"/><path d="M711.75 643.5 V647" stroke="#444" stroke-width="1"/><path d="M715.38 643.5 V647" stroke="#444" stroke-width="1"/><path d="M719.01 643.5 V651.2" stroke="#444" stroke-width="1"/><path d="M722.64 643.5 V647" stroke="#444" stroke-width="1"/><path d="M726.27 643.5 V647" stroke="#444" stroke-width="1"/><path d="M729.91 643.5 V647" stroke="#444" stroke-width="1"/><path d="M733.54 643.5 V651.2" stroke="#444" stroke-width="1"/><path d="M737.17 643.5 V647" stroke="#444" stroke-width="1"/><path d="M740.80 643.5 V647" stroke="#444" stroke-width="1"/><path d="M744.44 643.5 V647" stroke="#444" stroke-width="1"/><path d="M748.07 643.5 V651.2" stroke="#444" stroke-width="1"/><path d="M751.70 643.5 V647" stroke="#444" stroke-width="1"/><path d="M755.34 643.5 V647" stroke="#444" stroke-width="1"/><path d="M758.97 643.5 V647" stroke="#444" stroke-width="1"/><path d="M762.60 643.5 V651.2" stroke="#444" stroke-width="1"/></svg>
<div style="position:absolute;left:317.29999999999995px;width:600px;text-align:center;top:652.57px;font:400 8.3px/1 'Liberation Sans',sans-serif;color:#444;white-space:nowrap;">0</div>
<div style="position:absolute;left:331.8299999999999px;width:600px;text-align:center;top:652.57px;font:400 8.3px/1 'Liberation Sans',sans-serif;color:#444;white-space:nowrap;">10</div>
<div style="position:absolute;left:346.3599999999999px;width:600px;text-align:center;top:652.57px;font:400 8.3px/1 'Liberation Sans',sans-serif;color:#444;white-space:nowrap;">20</div>
<div style="position:absolute;left:360.89px;width:600px;text-align:center;top:652.57px;font:400 8.3px/1 'Liberation Sans',sans-serif;color:#444;white-space:nowrap;">30</div>
<div style="position:absolute;left:375.41999999999996px;width:600px;text-align:center;top:652.57px;font:400 8.3px/1 'Liberation Sans',sans-serif;color:#444;white-space:nowrap;">40</div>
<div style="position:absolute;left:389.94999999999993px;width:600px;text-align:center;top:652.57px;font:400 8.3px/1 'Liberation Sans',sans-serif;color:#444;white-space:nowrap;">50</div>
<div style="position:absolute;left:404.48px;width:600px;text-align:center;top:652.57px;font:400 8.3px/1 'Liberation Sans',sans-serif;color:#444;white-space:nowrap;">60</div>
<div style="position:absolute;left:419.01px;width:600px;text-align:center;top:652.57px;font:400 8.3px/1 'Liberation Sans',sans-serif;color:#444;white-space:nowrap;">70</div>
<div style="position:absolute;left:433.53999999999996px;width:600px;text-align:center;top:652.57px;font:400 8.3px/1 'Liberation Sans',sans-serif;color:#444;white-space:nowrap;">80</div>
<div style="position:absolute;left:448.06999999999994px;width:600px;text-align:center;top:652.57px;font:400 8.3px/1 'Liberation Sans',sans-serif;color:#444;white-space:nowrap;">90</div>
<div style="position:absolute;left:462.5999999999999px;width:600px;text-align:center;top:652.57px;font:400 8.3px/1 'Liberation Sans',sans-serif;color:#444;white-space:nowrap;">100</div>
<svg style="position:absolute;left:502px;top:38px;" width="14" height="14" viewBox="0 0 14 14"><circle cx="5.6" cy="5.6" r="4.3" fill="#e9f2fa" stroke="#3a6fa8" stroke-width="1.3"/>
<path d="M8.8 8.8 L12.8 12.8" stroke="#1e4f86" stroke-width="2"/></svg>
<svg style="position:absolute;left:527px;top:40px;" width="12" height="11" viewBox="0 0 12 11"><path d="M0.5 1.5H11.5M0.5 4H11.5M0.5 6.5H11.5M0.5 9H11.5" stroke="#222" stroke-width="1.2"/></svg>
<svg style="position:absolute;left:547px;top:40px;" width="12" height="11" viewBox="0 0 12 11"><g fill="none" stroke="#222" stroke-width="1.4"><rect x="1" y="1" width="3.5" height="3.3" rx="0.8"/><rect x="7" y="1" width="3.5" height="3.3" rx="0.8"/><rect x="1" y="6.6" width="3.5" height="3.3" rx="0.8"/><rect x="7" y="6.6" width="3.5" height="3.3" rx="0.8"/></g></svg>
<svg style="position:absolute;left:571px;top:40px;" width="10" height="10" viewBox="0 0 10 10"><path d="M1.2 1.2L8.8 8.8M8.8 1.2L1.2 8.8" stroke="#7d7d7d" stroke-width="1.5"/></svg>
<svg style="position:absolute;left:571px;top:62px;" width="9" height="11" viewBox="0 0 9 11"><path d="M0.5 0.5H8.5L4.5 4.2Z M0.5 6H8.5L4.5 9.8Z" fill="#939393"/></svg>
<svg style="position:absolute;left:553px;top:145.5px;" width="9" height="11" viewBox="0 0 9 11"><path d="M0.5 4.2H8.5L4.5 0.5Z M0.5 9.8H8.5L4.5 6Z" fill="#939393"/></svg>
<svg style="position:absolute;left:571px;top:145.5px;" width="9" height="11" viewBox="0 0 9 11"><path d="M0.5 0.5H8.5L4.5 4.2Z M0.5 6H8.5L4.5 9.8Z" fill="#939393"/></svg>
<svg style="position:absolute;left:571px;top:229px;" width="9" height="11" viewBox="0 0 9 11"><path d="M0.5 4.2H8.5L4.5 0.5Z M0.5 9.8H8.5L4.5 6Z" fill="#939393"/></svg>
<svg style="position:absolute;left:218px;top:85px;" width="24" height="24" viewBox="0 0 24 24"><path d="M2.5 7 Q9.6 0.5 16.7 7" fill="none" stroke="#a7cbe8" stroke-width="1.3"/>
<path d="M4.5 9.3 Q9.6 5 14.7 9.3" fill="none" stroke="#a7cbe8" stroke-width="1.3"/>
<circle cx="9.6" cy="13.7" r="2.8" fill="#a3c7e6"/><path d="M2.3 18.8 H16.3" stroke="#9d9d9d" stroke-width="1.4"/><path d="M15.3 15.0 L21.3 18.8 L15.3 22.6Z" fill="#9d9d9d"/><path d="M21.5 9.3 V21.6" stroke="#9d9d9d" stroke-width="1.3"/></svg>
<svg style="position:absolute;left:280px;top:85px;" width="24" height="24" viewBox="0 0 24 24"><defs><linearGradient id="av" x1="0" y1="0" x2="1" y2="1"><stop offset="0" stop-color="#dce9f5"/><stop offset="1" stop-color="#f4f8fb"/></linearGradient></defs>
<rect x="1.8" y="2" width="13.5" height="13.5" fill="url(#av)" stroke="#b9d0e4" stroke-width="0.9"/>
<rect x="4" y="5" width="8.6" height="4.5" fill="#fff" stroke="#a3c5e3" stroke-width="1"/><path d="M1.8 18.8 H15.8" stroke="#9d9d9d" stroke-width="1.4"/><path d="M14.8 15.0 L20.8 18.8 L14.8 22.6Z" fill="#9d9d9d"/><path d="M21.0 9.3 V21.6" stroke="#9d9d9d" stroke-width="1.3"/></svg>
<svg style="position:absolute;left:341px;top:85px;" width="24" height="24" viewBox="0 0 24 24"><circle cx="9" cy="6.8" r="3.6" fill="#fff" stroke="#a7cbe8" stroke-width="1.5"/>
<path d="M9 10.5 V16" stroke="#a7cbe8" stroke-width="1.6"/><path d="M2.3 18.8 H16.3" stroke="#9d9d9d" stroke-width="1.4"/><path d="M15.3 15.0 L21.3 18.8 L15.3 22.6Z" fill="#9d9d9d"/><path d="M21.5 9.3 V21.6" stroke="#9d9d9d" stroke-width="1.3"/></svg>
<svg style="position:absolute;left:405px;top:86.5px;" width="20" height="19" viewBox="0 0 20 19"><defs><linearGradient id="cp" x1="0" y1="0" x2="0" y2="1"><stop offset="0" stop-color="#8a8a8a"/><stop offset="1" stop-color="#444"/></linearGradient></defs>
<rect x="0.3" y="0.3" width="19" height="18.2" rx="0.8" fill="url(#cp)" stroke="#333" stroke-width="0.6"/>
<path d="M2 2.3 H11" stroke="#ddd" stroke-width="0.7"/>
<circle cx="5" cy="6.4" r="1.9" fill="none" stroke="#f4f4f4" stroke-width="0.9"/>
<rect x="10" y="4.8" width="7.5" height="3.4" fill="none" stroke="#f4f4f4" stroke-width="0.9"/>
<path d="M2 10.3 H8" stroke="#bbb" stroke-width="0.7"/>
<rect x="2.5" y="12.2" width="5.5" height="3.4" fill="none" stroke="#f4f4f4" stroke-width="0.9"/>
<rect x="10" y="12.2" width="7.5" height="3.4" fill="none" stroke="#f4f4f4" stroke-width="0.9"/></svg>
<svg style="position:absolute;left:469px;top:88px;" width="16" height="17" viewBox="0 0 16 17"><rect x="0.6" y="0.9" width="14.6" height="14.8" fill="#fff" stroke="#8a8a8a" stroke-width="1"/>
<rect x="1" y="1.3" width="13.8" height="2.6" fill="#a8a8a8"/><rect x="2" y="1.6" width="3.5" height="2" fill="#1f63b0"/>
<path d="M1 6.5H15M1 9.2H15M1 12H15M5.2 4V15.6M10.4 4V15.6" stroke="#c4c4c4" stroke-width="0.7"/>
<rect x="4" y="8.3" width="7.5" height="4.6" fill="#cfe6fb" stroke="#52aef5" stroke-width="1.2"/></svg>
<svg style="position:absolute;left:525px;top:84px;" width="26" height="24" viewBox="0 0 26 24"><path d="M3 6.5 Q9.5 0.3 16.5 6" fill="none" stroke="#2a79c0" stroke-width="1.9"/>
<path d="M5.5 9.3 Q10 5.2 14.8 9" fill="none" stroke="#2a79c0" stroke-width="1.9"/>
<circle cx="9.3" cy="13.5" r="3.1" fill="#2a79c0"/><g transform="translate(16.3 16)"><path d="M6.40 0.00L4.44 1.19M5.54 3.20L3.25 3.25M3.20 5.54L1.19 4.44M-0.00 6.40L-1.19 4.44M-3.20 5.54L-3.25 3.25M-5.54 3.20L-4.44 1.19M-6.40 -0.00L-4.44 -1.19M-5.54 -3.20L-3.25 -3.25M-3.20 -5.54L-1.19 -4.44M0.00 -6.40L1.19 -4.44M3.20 -5.54L3.25 -3.25M5.54 -3.20L4.44 -1.19" fill="none"/><circle r="5.4" fill="#8a8a8a" stroke="#444" stroke-width="2" stroke-dasharray="1.6 1.2"/><circle r="3.6" fill="#9a9a9a" stroke="#3a3a3a" stroke-width="0.9"/><circle r="1.7" fill="#fff"/></g></svg>
<svg style="position:absolute;left:219px;top:169px;" width="24" height="24" viewBox="0 0 24 24"><defs><radialGradient id="hsg"><stop offset="0.3" stop-color="#fff"/><stop offset="1" stop-color="#777"/></radialGradient></defs><g transform="translate(10.5 10.2)"><path d="M6.27 1.27 L7.77 2.62 L6.99 4.28 L5.00 4.00 L3.99 5.01 L4.27 7.00 L2.61 7.77 L1.26 6.28 L-0.16 6.40 L-1.23 8.11 L-3.00 7.63 L-3.07 5.62 L-4.24 4.80 L-6.16 5.42 L-7.20 3.92 L-5.96 2.33 L-6.33 0.95 L-8.20 0.19 L-8.04 -1.63 L-6.06 -2.05 L-5.46 -3.34 L-6.40 -5.12 L-5.11 -6.41 L-3.33 -5.47 L-2.04 -6.07 L-1.61 -8.04 L0.21 -8.20 L0.96 -6.33 L2.34 -5.96 L3.93 -7.20 L5.43 -6.15 L4.81 -4.23 L5.62 -3.06 L7.64 -2.98 L8.11 -1.22 L6.40 -0.15Z" fill="#ececec" stroke="#333" stroke-width="1.1" stroke-linejoin="round"/>
<circle r="4.6" fill="url(#hsg)" stroke="#2a2a2a" stroke-width="1.5"/><circle r="1.6" fill="#fff"/></g>
<rect x="10.5" y="12" width="10" height="8.5" fill="#2e8a2e" stroke="#7cc76e" stroke-width="0.8" stroke-dasharray="1 0.8"/>
<path d="M14 14 L19.5 16 L17 19" fill="#a8d83a"/></svg>
<svg style="position:absolute;left:218px;top:252px;" width="26" height="24" viewBox="0 0 26 24"><rect x="3.0" y="3.0" width="13.5" height="15" fill="#fbf3c9"/>
<path d="M5.0 2.5 H2.5 V18.0 H5.0 M14.5 2.5 H17.0 V18.0 H14.5" fill="none" stroke="#6d98c9" stroke-width="1"/>
<text x="9.7" y="9.1" font-family="Liberation Sans" font-weight="700" font-size="5.6" fill="#3f7cc0" text-anchor="middle">101</text>
<text x="9.7" y="15.5" font-family="Liberation Sans" font-weight="700" font-size="5.6" fill="#3f7cc0" text-anchor="middle">101</text><path d="M6.5 17 L9.5 19.5 M9.5 19.5 L6 22" stroke="#333" stroke-width="1"/><rect x="10.2" y="13.3" width="9.5" height="8.3" fill="#f2f2f2" stroke="#222" stroke-width="1.1"/><path d="M20 15.5 L22.8 17.4 L20 19.3" fill="#fff" stroke="#444" stroke-width="0.8"/></svg>
<svg style="position:absolute;left:280px;top:252px;" width="26" height="24" viewBox="0 0 26 24"><rect x="3.0" y="3.0" width="13.5" height="15" fill="#fbf3c9"/>
<path d="M5.0 2.5 H2.5 V18.0 H5.0 M14.5 2.5 H17.0 V18.0 H14.5" fill="none" stroke="#6d98c9" stroke-width="1"/>
<text x="9.7" y="9.1" font-family="Liberation Sans" font-weight="700" font-size="5.6" fill="#3f7cc0" text-anchor="middle">I0I</text>
<text x="9.7" y="15.5" font-family="Liberation Sans" font-weight="700" font-size="5.6" fill="#3f7cc0" text-anchor="middle">0I0</text><circle cx="17.5" cy="17.3" r="4.3" fill="#fff" stroke="#333" stroke-width="1.4"/><path d="M16.3 15.2V19.4M18.7 15.2V19.4" stroke="#333" stroke-width="1"/></svg>
<svg style="position:absolute;left:341px;top:252px;" width="26" height="24" viewBox="0 0 26 24"><rect x="6" y="5" width="12" height="14" fill="#ccc" stroke="#777" stroke-width="0.8"/><rect x="4" y="3" width="12" height="14" fill="#ddd" stroke="#888" stroke-width="0.8"/><rect x="3.0" y="3.0" width="13.5" height="15" fill="#fbf3c9"/>
<path d="M5.0 2.5 H2.5 V18.0 H5.0 M14.5 2.5 H17.0 V18.0 H14.5" fill="none" stroke="#6d98c9" stroke-width="1"/>
<text x="9.7" y="9.1" font-family="Liberation Sans" font-weight="700" font-size="5.6" fill="#3f7cc0" text-anchor="middle">I0I</text>
<text x="9.7" y="15.5" font-family="Liberation Sans" font-weight="700" font-size="5.6" fill="#3f7cc0" text-anchor="middle">0I0</text><path d="M13 11 H18 V15.5 H21 L15.5 21.5 L10 15.5 H13 Z" fill="#7cc94a" stroke="#2c8a24" stroke-width="0.9"/></svg>
<svg style="position:absolute;left:204px;top:320px;" width="26" height="26" viewBox="0 0 26 26"><rect x="1.8" y="2" width="16.2" height="15.4" fill="#3d8f35" stroke="#2a6a25" stroke-width="0.7"/>
<rect x="3" y="4" width="6.5" height="6.5" fill="#5a5a5a" stroke="#777" stroke-width="0.5"/>
<path d="M12.5 5H16M12.5 8H16M5 13.5H15M3.5 16.5H10" stroke="#b07a50" stroke-width="1.2" stroke-dasharray="1.2 1"/>
<g transform="translate(15.5 19) rotate(-35)"><rect x="-7" y="-3.3" width="14" height="6.6" rx="1" fill="#f0c7c7" stroke="#b2454f" stroke-width="1.2"/><rect x="-6" y="-1" width="5" height="3.2" fill="#fff"/></g></svg>
</body></html>
